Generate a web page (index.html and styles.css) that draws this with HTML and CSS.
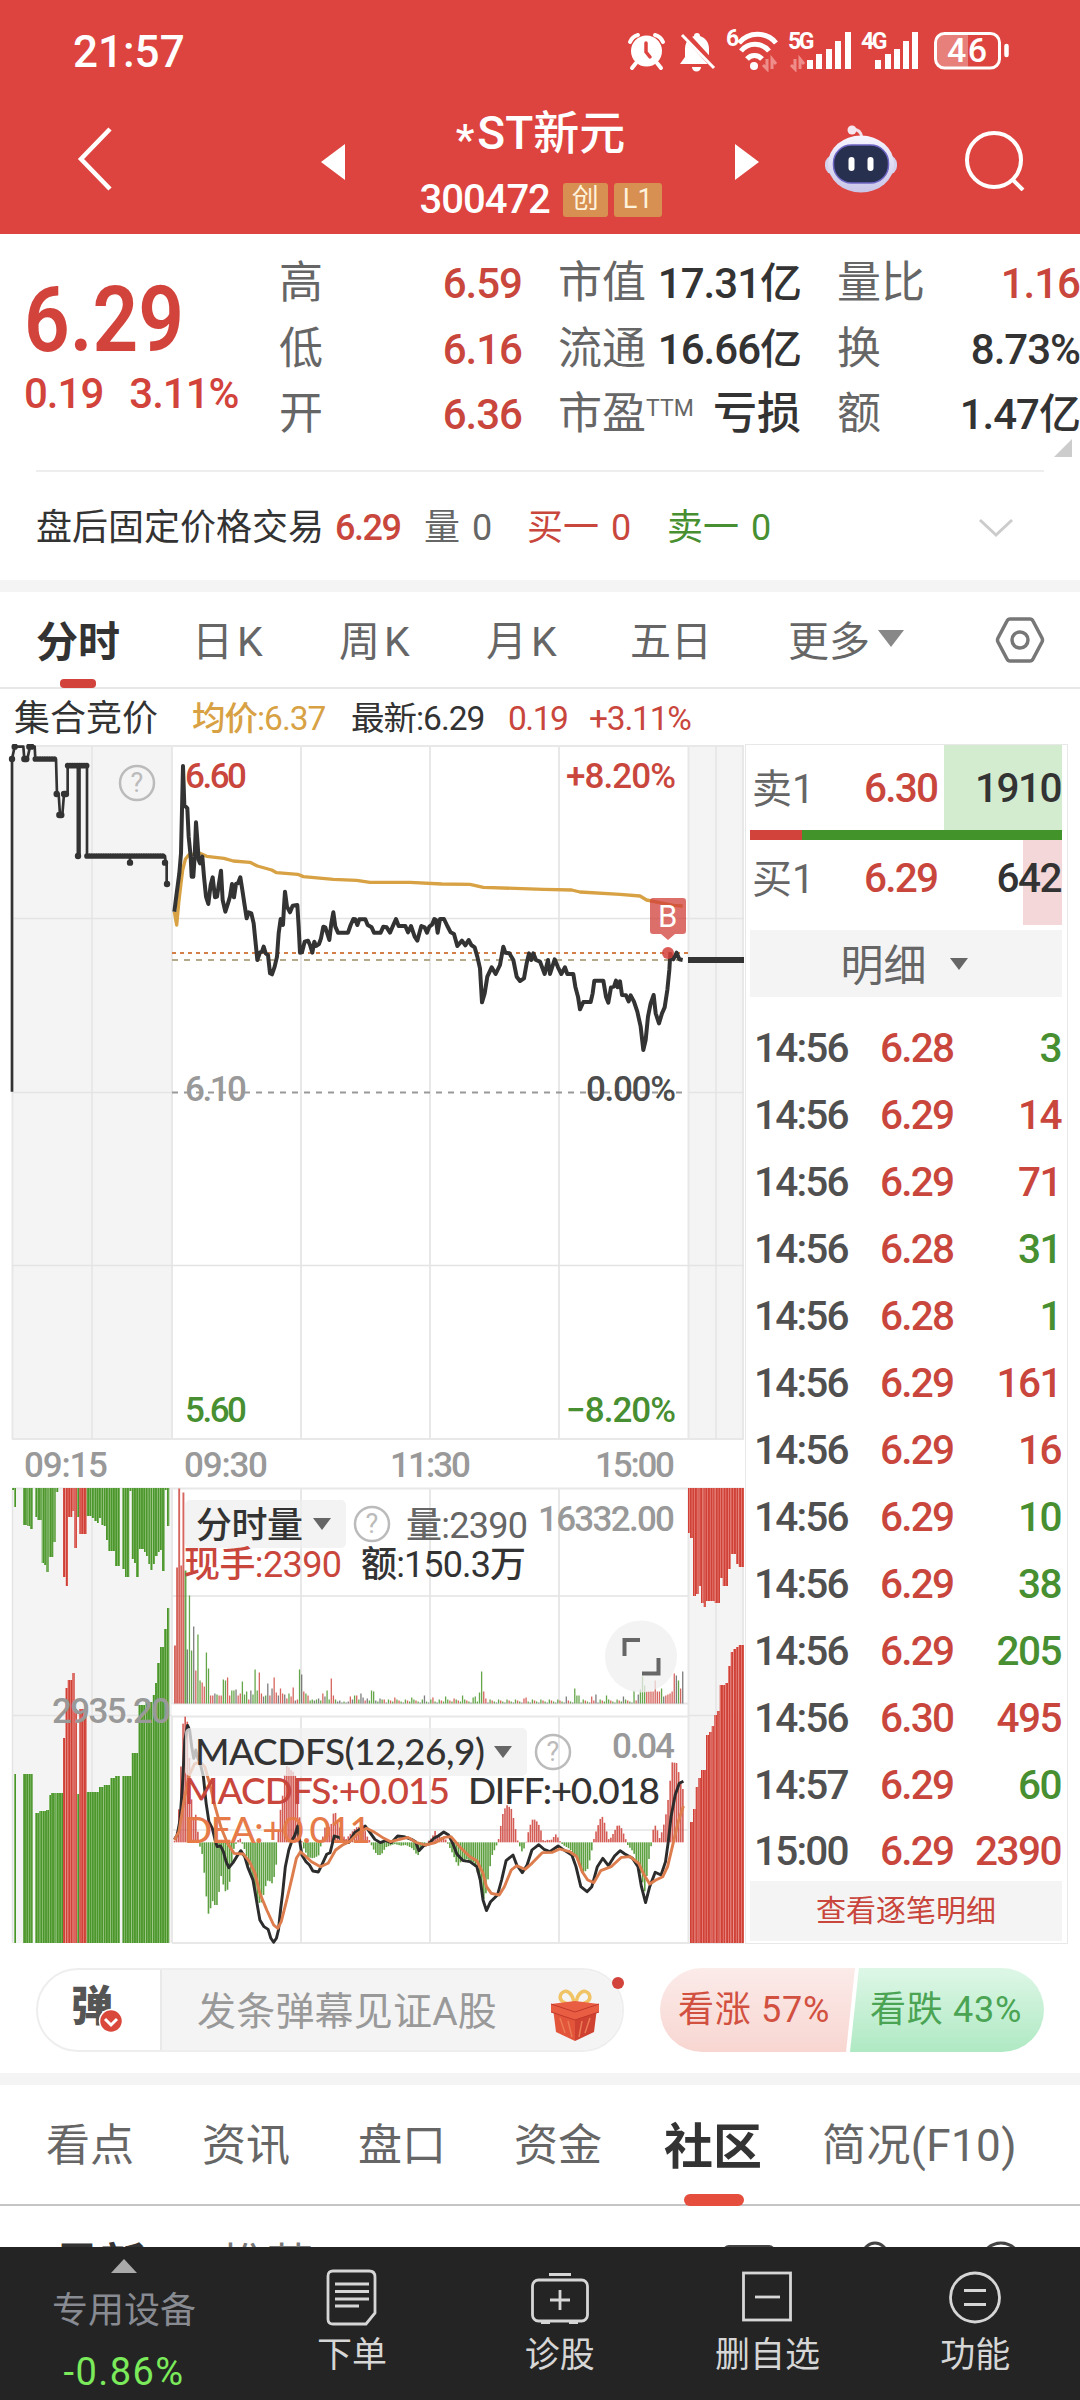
FILE: index.html
```html
<!DOCTYPE html>
<html lang="zh-CN">
<head>
    <meta charset="UTF-8">
    <meta name="viewport" content="width=device-width, initial-scale=1.0">
    <title>*ST新元 300472</title>
    <link rel="stylesheet" href="styles.css">
</head>
<body>
    <header class="header">
        <div class="status-bar">
            <span class="clock">21:57</span>
            <svg class="status-icons" width="386" height="46" viewBox="626 26 386 46">
                <!-- alarm -->
                <g fill="none" stroke="#fff" stroke-linecap="round">
                    <circle cx="646.500" cy="51" r="15.500" fill="#fff" stroke="none"/>
                    <path d="M630 42a12 12 0 0 1 8-7M663 42a12 12 0 0 0-8-7" stroke-width="4"/>
                    <path d="M636 63l-4 5M657 63l4 5" stroke-width="4"/>
                    <path d="M646 43v9l4 5" stroke="#dd443f" stroke-width="3.500"/>
                </g>
                <!-- muted bell -->
                <path d="M697 33c2 0 3 1 3 3 6 2 9 7 9 13v8l5 7H680l5-7v-8c0-6 3-11 9-13 0-2 1-3 3-3zM692 67h9a4.500 4.500 0 0 1-9 0z" fill="#fff"/>
                <path d="M684 33l32 35" stroke="#dd443f" stroke-width="7"/>
                <path d="M682 35l32 33" stroke="#fff" stroke-width="3"/>
                <!-- wifi -->
                <text x="726" y="46" class="st-small">6</text>
                <g fill="none" stroke="#fff" stroke-width="5">
                    <path d="M739 43a24 24 0 0 1 37 0"/>
                    <path d="M741 51a18 18 0 0 1 28 0"/>
                    <path d="M747 59a10 10 0 0 1 15 0"/>
                </g>
                <circle cx="754" cy="66" r="4" fill="#fff"/>
                <path d="M767 59v10l-4-4M772 69V59l4 5M795 59v10l-4-4M800 69V59l4 5" fill="none" stroke="#ee8d8a" stroke-width="3"/>
                <!-- signals -->
                <text x="788" y="49" class="st-small">5G</text>
                <path d="M810 69v-9M819 69V54M829 69V49M838 69V41M848 69V32M878 69v-9M888 69V54M897 69V49M906 69V41M915 69V32" stroke="#fff" stroke-width="6"/>
                <text x="861" y="49" class="st-small">4G</text>
                <!-- battery -->
                <path d="M944 34h24v34h-24q-8 0-8-8V42q0-8 8-8z" fill="#e77f7b"/>
                <rect x="935.500" y="33.500" width="64" height="34.500" rx="9" fill="none" stroke="#fff" stroke-width="3"/>
                <path d="M1006.500 46v9" stroke="#fff" stroke-width="4.500" stroke-linecap="round"/>
                <text x="947" y="62" class="st-batt" textLength="40">46</text>
            </svg>
        </div>
        <div class="title-bar">
            <svg class="back" width="38" height="66" viewBox="0 0 38 66"><path d="M33 3L4 33l29 30" fill="none" stroke="#fff" stroke-width="4.500"/></svg>
            <svg class="prev" width="24" height="36" viewBox="0 0 24 36"><path d="M24 0v36L0 18z" fill="#fff"/></svg>
            <div class="title">
                <h1><span class="star">*</span>ST新元</h1>
                <p class="code"><span>300472</span><b>创</b><b>L1</b></p>
            </div>
            <svg width="24" height="36" viewBox="0 0 24 36"><path d="M0 0v36l24-18z" fill="#fff"/></svg>
            <svg class="robot" width="74" height="70" viewBox="824 124 74 70">
                <defs>
                    <linearGradient id="shell" x1="0" y1="0" x2="0" y2="1"><stop offset="0" stop-color="#f6f5ff"/><stop offset="1" stop-color="#c9c5e8"/></linearGradient>
                </defs>
                <path d="M862 138q-1-9-10-9" fill="none" stroke="#f3dfe8" stroke-width="3"/>
                <circle cx="852" cy="130" r="4.500" fill="#f5e6f0"/>
                <rect x="825" y="155" width="72" height="20" rx="9" fill="#d5d2ee"/>
                <ellipse cx="861" cy="164" rx="33" ry="28.500" fill="url(#shell)"/>
                <rect x="833.500" y="145" width="55" height="38" rx="18" fill="#27304f" stroke="#6d66c4" stroke-width="1.500"/>
                <path d="M851.500 160v8M870.500 160v8" stroke="#fff" stroke-width="6" stroke-linecap="round"/>
            </svg>
            <svg class="search" width="60" height="62" viewBox="0 0 60 62"><circle cx="29" cy="31" r="27" fill="none" stroke="#fff" stroke-width="4"/><path d="M47 50l11 11" stroke="#fff" stroke-width="4"/></svg>
        </div>
    </header>

    <section class="quote">
        <div class="price">
            <div class="last">6.29</div>
            <div class="change"><span>0.19</span><span>3.11%</span></div>
        </div>
        <dl class="stats">
            <dt>高</dt><dd class="red">6.59</dd>
            <dt>市值</dt><dd>17.31亿</dd>
            <dt>量比</dt><dd class="red">1.16</dd>
            <dt>低</dt><dd class="red">6.16</dd>
            <dt>流通</dt><dd>16.66亿</dd>
            <dt>换</dt><dd>8.73%</dd>
            <dt>开</dt><dd class="red">6.36</dd>
            <dt>市盈<sup>TTM</sup></dt><dd class="wide">亏损</dd>
            <dt>额</dt><dd>1.47亿</dd>
        </dl>
        <svg class="corner" width="18" height="18" viewBox="0 0 18 18"><path d="M18 0v18H0z" fill="#ccc"/></svg>
    </section>
    <section class="after-hours">
        <span class="ah-name">盘后固定价格交易</span>
        <span class="ah-price red">6.29</span>
        <span class="ah-vol">量 0</span>
        <span class="ah-buy red">买一 0</span>
        <span class="ah-sell green">卖一 0</span>
        <svg class="ah-more" width="36" height="20" viewBox="0 0 36 20"><path d="M2 2l16 15L34 2" fill="none" stroke="#ccc" stroke-width="3"/></svg>
    </section>

    <nav class="chart-tabs">
        <span class="active">分时</span>
        <span>日K</span>
        <span>周K</span>
        <span>月K</span>
        <span>五日</span>
        <span class="more">更多<i></i></span>
        <svg class="setting" width="50" height="48" viewBox="0 0 50 48"><path d="M15 3h20q2 0 3 2l9 17q1 2 0 4l-9 17q-1 2-3 2H15q-2 0-3-2L3 26q-1-2 0-4l9-17q1-2 3-2z" fill="none" stroke="#777" stroke-width="3.500"/><circle cx="25" cy="24" r="8" fill="none" stroke="#777" stroke-width="3.500"/></svg>
    </nav>

    <div class="info-row">
        <span class="ir-name">集合竞价</span>
        <span class="ir-avg">均价:6.37</span>
        <span class="ir-last">最新:6.29</span>
        <span class="ir-diff red">0.19</span>
        <span class="ir-pct red">+3.11%</span>
    </div>

    <main class="board">
        <svg class="chart" width="745" height="1200" viewBox="0 744 745 1200">
            <defs>
                <pattern id="stripeGreen" width="2.340" height="10" patternUnits="userSpaceOnUse"><rect width="2.340" height="10" fill="#4b962b"/><rect width=".5" height="10" fill="#a8d092"/></pattern>
                <pattern id="stripeRed" width="2.600" height="10" patternUnits="userSpaceOnUse"><rect width="2.600" height="10" fill="#cf4037"/><rect width=".6" height="10" fill="#f29a92"/></pattern>
            </defs>

            <!-- panels and grid -->
            <path d="M12 746h160v693H12zM688 746h56v693h-56zM12 1488h160v455H12zM688 1488h56v455h-56z" fill="#f4f4f4"/>
            <g class="grid">
                <path d="M12 746H744M12 1439H744M12 1488.500H744M172 1716.500H688M172 1943H744M172 1703.500H688"/>
                <path d="M12.500 746v693M172 746v693M301 746v693M430 746v693M559 746v693M688.500 746v693M743 746v693"/>
                <path d="M172 1489v215M301 1489v215M430 1489v215M559 1489v215M688.500 1489v454M743 1489v454M172 1716v227M301 1716v227M430 1716v227M559 1716v227"/>
                <path class="thin" d="M92 746v693M716 746v693M12 918.500H744M12 1265.500H744M12 1092.500H172M688 1092.500H744M92 1489v454M716 1489v454M12.500 1489v454M172 1596H688M12 1715.500H172M688 1715.500H744M172 1830H688"/>
            </g>
            <g fill="none" stroke-width="2">
                <path d="M172 1092.500H682" stroke="#999" stroke-dasharray="6 6"/>
                <path d="M172 960H688" stroke="#b5a98b" stroke-dasharray="6 6"/>
                <path d="M172 953H688" stroke="#d27f4a" stroke-dasharray="4 4"/>
            </g>

            <!-- price labels -->
            <text x="185" y="788" class="red" textLength="62">6.60</text>
            <text x="566" y="788" class="red" textLength="110">+8.20%</text>
            <text x="185" y="1101" class="gray" textLength="62">6.10</text>
            <text x="586" y="1101" class="dark" textLength="90">0.00%</text>
            <text x="185" y="1422" class="green" textLength="62">5.60</text>
            <text x="566" y="1422" class="green" textLength="110">−8.20%</text>
            <text x="24" y="1477" class="gray" textLength="84">09:15</text>
            <text x="184" y="1477" class="gray" textLength="84">09:30</text>
            <text x="390" y="1477" class="gray" textLength="81">11:30</text>
            <text x="595" y="1477" class="gray" textLength="80">15:00</text>

            <!-- call auction and intraday price -->
            <g transform="translate(0 740) scale(.33333)" fill="none" stroke="#333" stroke-linejoin="round">
                <path stroke-width="8" d="M36 1055V57L44 20H70L73 57H82L90 20H104L106 57H168L171 162H176L180 225H187L192 162H203V77H261V348H390V368V348H495L497 368H500V432"/>
                <path stroke-width="13" d="M236 77V348"/>
                <path stroke-width="17" stroke-linecap="round" stroke-dasharray=".1 7" d="M106 57H168M203 77H261M261 348H495"/>
                <path stroke-width="19" stroke-linecap="round" d="M36 57h.1M44 20h.1M73 57h6M88 20h6M170 162h.1M178 225h6M192 162h6M234 348h.1M390 368h.1M495 368h.1M501 432h.1"/>
                <path stroke="#d7a144" stroke-width="10" d="M523 515L530 555L536 490L543 430L548 390L556 358L566 345L600 340L620 349L672 355L700 363L750 367L772 378L815 390L830 398L893 403L910 410L1000 418L1070 421L1110 427L1230 427L1325 432L1410 433L1450 442L1630 448L1715 450L1740 456L1860 463L1920 468L1940 480L2020 496L2048 498"/>
                <path stroke-width="12" d="M523 515L530 460L538 400L543 340L549 78L553 195L562 205L566 290L572 350L575 410L580 410L584 350L588 247L592 300L596 360L600 370L607 350L612 410L618 470L625 492L632 435L638 412L645 472L651 470L657 430L663 392L668 480L676 515L684 490L690 470L696 432L702 472L708 432L714 430L721 412L727 450L733 490L740 535L746 517L754 520L761 550L766 600L772 660L780 637L786 635L791 620L797 640L804 645L810 700L816 703L824 680L831 650L836 580L842 537L849 555L852 500L855 455L861 500L870 517L878 497L892 495L896 560L900 638L906 637L914 605L924 602L930 615L937 638L943 605L948 618L957 612L963 595L970 560L976 562L988 600L994 550L1000 517L1006 560L1014 578L1044 578L1052 555L1060 537L1066 538L1072 555L1078 538L1096 538L1103 555L1115 562L1122 578L1142 578L1150 560L1160 562L1170 578L1180 555L1188 537L1196 558L1216 558L1224 577L1233 558L1244 590L1252 602L1258 580L1264 558L1274 562L1281 578L1288 560L1296 554L1303 537L1308 540L1313 578L1320 537L1332 537L1342 558L1352 577L1362 582L1372 618L1386 602L1396 616L1406 600L1414 615L1424 622L1432 650L1440 685L1446 787L1454 760L1462 710L1475 682L1487 702L1500 675L1510 620L1516 638L1528 640L1540 660L1550 710L1560 723L1572 715L1580 670L1587 640L1594 660L1600 640L1608 660L1620 665L1634 702L1644 660L1650 702L1664 658L1674 682L1684 702L1695 682L1702 702L1720 702L1726 740L1734 770L1740 808L1750 786L1772 786L1778 760L1783 722L1810 722L1818 770L1825 788L1833 742L1842 740L1848 722L1853 742L1860 724L1866 765L1878 766L1886 784L1892 766L1902 785L1912 815L1922 860L1930 930L1937 900L1944 830L1952 790L1961 765L1967 820L1977 850L1986 820L1994 802L2002 750L2008 690L2011 642L2020 658L2030 638L2038 658L2048 660"/>
            </g>
            <path d="M688 960H744" stroke="#333" stroke-width="6"/>

            <!-- buy marker -->
            <path d="M653 898h30q3 0 3 3v30q0 3-3 3h-8l-7 6-7-6h-8q-3 0-3-3v-30q0-3 3-3z" fill="#d23f39" opacity=".75"/>
            <text x="658" y="927" class="marker">B</text>
            <circle cx="668" cy="953" r="6" fill="#d23f39" opacity=".85"/>

            <g id="sideBars"></g>
            <g id="volumeBars"></g>
            <g id="macdBars" transform="translate(160 1700) scale(.34437 .33333)"></g>
            <g transform="translate(160 1700) scale(.34437 .33333)" fill="none" stroke-width="8.500" stroke-linejoin="round">
                <path stroke="#2c2c2c" d="M42 418L50 405L58 360L65 260L72 120L80 76L86 90L92 140L98 175L104 150L110 175L118 195L126 230L134 310L142 365L152 385L160 420L166 440L176 438L184 455L192 485L200 503L212 488L224 468L235 452L246 470L256 505L270 540L280 600L290 660L302 680L314 688L322 715L330 727L338 715L344 690L350 630L356 580L364 500L374 450L384 420L392 405L400 378L406 425L412 465L424 485L434 495L444 513L460 516L472 490L484 463L494 458L506 408L520 412L532 424L548 428L565 398L580 388L596 378L608 395L624 418L640 428L655 422L672 428L690 408L708 410L730 418L742 425L752 452L765 438L780 432L795 415L808 408L824 396L838 405L850 430L862 462L880 482L900 485L920 500L930 540L938 600L948 632L960 605L980 585L992 540L1005 482L1025 465L1036 495L1052 518L1066 495L1080 450L1100 434L1115 448L1132 455L1156 438L1170 448L1196 465L1208 500L1222 560L1240 575L1254 560L1270 500L1286 475L1302 497L1320 468L1336 452L1350 462L1372 475L1388 500L1398 560L1410 608L1422 560L1438 517L1455 525L1468 485L1476 425L1484 350L1496 285L1508 250L1520 244"/>
                <path stroke="#dd7c4c" d="M42 420L55 395L70 300L85 225L100 192L116 185L130 200L145 255L160 320L178 385L196 430L215 460L242 462L260 485L276 520L290 580L310 630L330 675L342 685L352 665L368 600L384 530L396 475L408 455L422 468L440 485L466 500L488 490L510 450L530 435L550 425L575 400L600 385L620 395L650 415L670 425L690 420L720 412L745 428L770 435L800 428L825 412L845 410L870 440L900 470L920 482L938 520L948 560L962 580L985 585L1000 560L1020 510L1036 497L1060 508L1080 490L1110 458L1140 457L1160 447L1190 455L1210 470L1226 515L1242 540L1260 548L1280 512L1310 500L1340 472L1365 470L1390 490L1406 525L1422 552L1440 540L1460 530L1474 500L1490 430L1505 365L1520 318"/>
            </g>

            <!-- indicator labels -->
            <text x="52" y="1723" class="gray" textLength="119">2935.20</text>
            <g fill="#efefef" opacity=".75">
                <rect x="185" y="1500" width="161" height="48" rx="5"/>
                <rect x="185" y="1728" width="342" height="48" rx="5"/>
                <circle cx="641" cy="1656.500" r="36"/>
            </g>
            <path d="M313 1518h18l-9 12zM494 1746h18l-9 12z" fill="#666"/>
            <path d="M624.500 1656v-16H640M642 1673.500h16.500V1658" fill="none" stroke="#666" stroke-width="4"/>
            <text x="196" y="1538" class="black cjk" textLength="107">分时量</text>
            <text x="406" y="1538" class="dim cjk" textLength="122">量:2390</text>
            <text x="538" y="1531" class="gray" textLength="137">16332.00</text>
            <text x="184" y="1577" class="red cjk" textLength="158">现手:2390</text>
            <text x="361" y="1577" class="black cjk" textLength="165">额:150.3万</text>
            <text x="195" y="1765" class="black latin" textLength="290">MACDFS(12,26,9)</text>
            <text x="612" y="1758" class="gray" textLength="63">0.04</text>
            <text x="184" y="1804" class="red latin" textLength="266">MACDFS:+0.015</text>
            <text x="468" y="1804" class="black latin" textLength="192">DIFF:+0.018</text>
            <text x="184" y="1843" class="orange latin" textLength="187">DEA:+0.011</text>
            <g class="help">
                <circle cx="137" cy="783" r="17"/><text x="137" y="792">?</text>
                <circle cx="372" cy="1524" r="17"/><text x="372" y="1533">?</text>
                <circle cx="553" cy="1752" r="17"/><text x="553" y="1761">?</text>
            </g>
        </svg>

        <aside class="ticks">
            <div class="level sell"><span>卖1</span><b>6.30</b><em>1910</em></div>
            <div class="ratio"><i></i></div>
            <div class="level buy"><span>买1</span><b>6.29</b><em>642</em></div>
            <div class="detail-head">明细<i></i></div>
            <ul>
                <li><span>14:56</span><b>6.28</b><em class="green">3</em></li>
                <li><span>14:56</span><b>6.29</b><em class="red">14</em></li>
                <li><span>14:56</span><b>6.29</b><em class="red">71</em></li>
                <li><span>14:56</span><b>6.28</b><em class="green">31</em></li>
                <li><span>14:56</span><b>6.28</b><em class="green">1</em></li>
                <li><span>14:56</span><b>6.29</b><em class="red">161</em></li>
                <li><span>14:56</span><b>6.29</b><em class="red">16</em></li>
                <li><span>14:56</span><b>6.29</b><em class="green">10</em></li>
                <li><span>14:56</span><b>6.29</b><em class="green">38</em></li>
                <li><span>14:56</span><b>6.29</b><em class="green">205</em></li>
                <li><span>14:56</span><b>6.30</b><em class="red">495</em></li>
                <li><span>14:57</span><b>6.29</b><em class="green">60</em></li>
                <li><span>15:00</span><b>6.29</b><em class="red">2390</em></li>
            </ul>
            <div class="detail-foot">查看逐笔明细</div>
        </aside>
    </main>

    <section class="danmu">
        <div class="danmu-box">
            <div class="danmu-switch">弹
                <svg class="check" width="26" height="26" viewBox="0 0 26 26"><circle cx="13" cy="13" r="11.500" fill="#d9483a" stroke="#fff" stroke-width="1.500"/><path d="M7 11l6 6 6-6" fill="none" stroke="#fff" stroke-width="3"/></svg>
            </div>
            <div class="danmu-input"><span>发条弹幕见证A股</span>
                <svg width="50" height="54" viewBox="0 0 50 54">
                    <path d="M24 16c-10 1-16-4-13-10 4-6 12-2 13 10zM26 16c10 1 16-4 13-10-4-6-12-2-13 10z" fill="none" stroke="#f0c465" stroke-width="3.500"/>
                    <path d="M3 20l22 9v24L6 44z" fill="#e2553a"/>
                    <path d="M47 20l-22 9v24l19-9z" fill="#cf4130"/>
                    <path d="M1 16l24-3 24 3v8l-24 8-24-8z" fill="#e95d43"/>
                    <path d="M1 16l24 8 24-8M1 24l24 8 24-8" fill="none" stroke="#c2392b" stroke-width="1"/>
                    <path d="M10 30l5 15M18 33l4 16M40 30l-5 15M32 33l-3 16" stroke="#ec7a54" stroke-width="1.500"/>
                </svg>
            </div>
            <i class="dot"></i>
        </div>
        <div class="vote"><span class="up">看涨 57%</span><span class="down">看跌 43%</span></div>
    </section>

    <nav class="page-tabs">
        <span>看点</span><span>资讯</span><span>盘口</span><span>资金</span><span class="active">社区</span><span class="last-tab">简况(F10)</span>
    </nav>
    <div class="sub-tabs">
        <b>最新</b><span>推荐</span>
        <svg width="300" height="42" viewBox="720 2205 300 42"><g fill="none" stroke="#444" stroke-width="3"><rect x="724" y="2245.500" width="50" height="40" rx="5"/><circle cx="875" cy="2254" r="12"/><circle cx="1001" cy="2262" r="20"/></g></svg>
    </div>

    <footer class="toolbar">
        <div class="sector"><i></i><span>专用设备</span><em>-0.86%</em></div>
        <div class="tool">
            <svg width="58" height="58" viewBox="0 0 58 58"><path d="M10 3h36q6 0 6 6v36l-9 11H10q-5 0-5-5V8q0-5 5-5z"/><path d="M12 16h34M12 23.500h34M12 31h34M12 38h24"/></svg>
            <span>下单</span>
        </div>
        <div class="tool">
            <svg width="58" height="58" viewBox="0 0 58 58"><rect x="1.500" y="12" width="55" height="41" rx="6"/><path d="M18 6.500h22M29 22v20M19 32h20M10 54.500h9M38 54.500h9"/></svg>
            <span>诊股</span>
        </div>
        <div class="tool">
            <svg width="58" height="58" viewBox="0 0 58 58"><rect x="5.500" y="5" width="47" height="47"/><path d="M17 29h25"/></svg>
            <span>删自选</span>
        </div>
        <div class="tool">
            <svg width="58" height="58" viewBox="0 0 58 58"><circle cx="29" cy="29.500" r="24.500"/><path d="M18 22.500h22M18 36.500h22"/></svg>
            <span>功能</span>
        </div>
    </footer>

    <script src="script.js"></script>
</body>
</html>
```
FILE: styles.css
```css
* {
    margin: 0;
    padding: 0;
    box-sizing: border-box;
}

body {
    width: 1080px;
    height: 2400px;
    overflow: hidden;
    background-color: #fff;
    color: #333;
    font-family: Roboto, "Noto Sans CJK SC", sans-serif;
    white-space: nowrap;
}

svg { display: block; flex: none; }
b, em, i { font-style: normal; font-weight: inherit; }
ul { list-style: none; }

.red { color: #c9463d; }
.green { color: #478f31; }

/* Header */
.header {
    height: 234px;
    background-color: #dd443f;
    color: #fff;
}

.status-bar {
    display: flex;
    justify-content: space-between;
    height: 103px;
    padding: 26px 68px 0 73px;
}

.clock {
    margin-top: 4px;
    font-size: 44px;
    font-weight: 500;
    line-height: 44px;
}

.st-small { font-size: 23px; font-weight: 700; letter-spacing: -2.500px; fill: #fff; }
.st-batt { font-size: 34px; font-weight: 500; fill: #fff; }

.title-bar {
    display: flex;
    align-items: flex-start;
}

.back { margin: 23px 0 0 77px; }
.prev { margin-left: 206px; }
.prev, .title + svg { margin-top: 41px; }
.title { width: 391px; text-align: center; }
.title + svg { margin-left: -1px; }
.robot { margin: 21px 0 0 65px; }
.search { margin: 26px 0 0 67px; }

.title h1 {
    padding-top: 2px;
    font-size: 46px;
    font-weight: 500;
    line-height: 56px;
}

.star { position: relative; top: 5px; font-size: 42px; margin-right: 3px; }

.code {
    display: flex;
    justify-content: center;
    align-items: center;
    gap: 6px;
    height: 34px;
    margin-top: 20px;
}

.code span {
    margin: -1px 7px 0 0;
    font-size: 40px;
    font-weight: 500;
    letter-spacing: -1px;
}

.code b {
    height: 34px;
    padding: 0 9px;
    border-radius: 3px;
    background-color: #d78f52;
    font-size: 27px;
    line-height: 32px;
    color: #fff2dc;
}

/* Quote */
.quote {
    display: flex;
    position: relative;
    height: 236px;
    padding-top: 17px;
}

.price { width: 279px; padding: 18px 0 0 24px; color: #d2433b; }

.last {
    font-size: 91px;
    font-weight: 600;
    line-height: 102px;
    transform: scaleX(.88);
    transform-origin: left;
}

.change {
    display: flex;
    gap: 26px;
    margin-top: -1px;
    font-size: 42px;
    font-weight: 500;
    line-height: 48px;
    letter-spacing: -1px;
}

.stats {
    display: grid;
    grid-template-columns: 100px 143px 137px 142px 137px 142px;
    grid-auto-rows: 65.500px;
    line-height: 65.500px;
}

.stats dt { font-size: 44px; color: #666; }
.stats dt:nth-of-type(3n+2), .stats dt:nth-of-type(3n) { padding-left: 36px; }

.stats sup {
    position: relative;
    top: -13px;
    font-size: 23px;
    line-height: 0;
    vertical-align: baseline;
}

.stats dd {
    display: flex;
    justify-content: flex-end;
    font-size: 42px;
    font-weight: 500;
    letter-spacing: -1px;
}

.stats .wide { font-size: 44px; letter-spacing: 0; }
.corner { position: absolute; left: 1054px; top: 205px; }

.after-hours {
    display: flex;
    align-items: center;
    height: 110px;
    margin: 0 36px;
    border-top: 2px solid #eee;
    font-size: 36px;
    line-height: 40px;
    padding-top: 3px;
}

.ah-name { width: 299px; }
.ah-price { width: 89px; letter-spacing: -1.500px; font-weight: 500; }
.ah-vol { width: 103px; color: #666; }
.ah-buy { width: 140px; }
.ah-sell { width: 276px; }
.ah-vol, .ah-buy, .ah-sell { word-spacing: 3px; }
.ah-more { margin-left: 35px; }

/* Chart tabs */
.chart-tabs {
    display: flex;
    align-items: center;
    height: 109px;
    border-top: 12px solid #f4f4f4;
    border-bottom: 2px solid #e8e8e8;
    padding: 0 0 3px 36px;
    font-size: 41px;
    color: #666;
}

.chart-tabs span { width: 147px; letter-spacing: 4px; }
.chart-tabs span:nth-child(1) { width: 156px; }
.chart-tabs span:nth-child(4) { width: 144px; }
.chart-tabs span:nth-child(5) { width: 158px; letter-spacing: 0; }
.chart-tabs .more { display: flex; align-items: center; width: 207px; letter-spacing: 0; }
.setting { margin-top: 3px; }

.chart-tabs .more i {
    margin-left: 8px;
    border: 13px solid transparent;
    border-top: 17px solid #888;
    border-bottom: 0;
}

.chart-tabs .active {
    position: relative;
    font-size: 42px;
    font-weight: 700;
    letter-spacing: 0;
    color: #333;
}

.chart-tabs .active::after {
    content: "";
    position: absolute;
    left: 24px;
    bottom: -19px;
    width: 36px;
    height: 9px;
    border-radius: 4px;
    background-color: #d2433b;
}

.info-row {
    display: flex;
    align-items: center;
    height: 55px;
    padding: 5px 0 0 14px;
    font-size: 33.500px;
    line-height: 40px;
    letter-spacing: -1px;
}

.ir-name { width: 178px; font-size: 36px; letter-spacing: 0; }
.ir-avg { width: 159px; color: #d7a144; font-weight: 450; }
.ir-last { width: 157px; }
.ir-diff { width: 81px; letter-spacing: -1.500px; }
.ir-pct { letter-spacing: -1.200px; }

/* Chart and ticks */
.board { display: flex; height: 1200px; }

.grid path { fill: none; stroke: #e8e8e8; stroke-width: 2; }
.grid .thin { stroke: #e4e4e4; stroke-width: 1.500; }

.chart text { font-size: 35px; font-weight: 500; }
.chart .cjk { font-size: 36px; font-weight: 450; }
.chart .latin { font-family: Lato, "Noto Sans", sans-serif; font-size: 37px; }
.chart .red { fill: #c9463d; }
.chart .green { fill: #478f31; }
.chart .gray { fill: #999; }
.chart .dim { fill: #666; }
.chart .dark { fill: #4c4c4c; }
.chart .black { fill: #333; }
.chart .orange { fill: #e67b49; }
.chart .marker { font-size: 31px; font-weight: 400; fill: #fff; }
.help circle { fill: none; stroke: #bbb; stroke-width: 2.500; }
.chart .help text { font-size: 27px; font-weight: 400; fill: #bbb; text-anchor: middle; }

.ticks {
    width: 323px;
    border: 1px solid #e8e8e8;
    padding: 0 5px 0 4px;
    font-size: 40.500px;
    font-weight: 500;
    letter-spacing: -1.800px;
}

.level {
    display: flex;
    align-items: center;
    height: 85px;
    padding: 1px 1px 0 2px;
}

.level span { width: 112px; margin-top: -4px; font-size: 40px; font-weight: 400; color: #666; letter-spacing: 0; }
.level b, .ticks li b { color: #c9463d; }
.level em, .ticks li em { margin-left: auto; letter-spacing: -1.500px; }
.sell { background: linear-gradient(#d3ebcf, #d3ebcf) right / 118px no-repeat; }

.ratio { height: 10px; background-color: #43932b; }
.ratio i { display: block; width: 52px; height: 10px; background-color: #d2433b; }

.buy {
    height: 85px;
    padding: 0 1px 9px 2px;
    background: linear-gradient(#f4d8d9, #f4d8d9) right / 39px no-repeat;
}

.detail-head {
    display: flex;
    align-items: center;
    justify-content: center;
    height: 67px;
    margin-top: 5px;
    padding: 0 0 4px;
    background-color: #f4f4f4;
    color: #666;
    font-size: 43px;
    font-weight: 400;
    letter-spacing: 0;
}

.detail-head i {
    margin: 4px 4px 0 23px;
    border: 9px solid transparent;
    border-top: 12px solid #666;
    border-bottom: 0;
}

.ticks ul { padding-top: 17px; }

.ticks li {
    display: flex;
    align-items: center;
    height: 67px;
    padding: 0 1px 0 4px;
}

.ticks li span { width: 126px; color: #505050; }
.ticks li:last-child { height: 66px; margin-bottom: -3px; }

.detail-foot {
    height: 60px;
    background-color: #f4f4f4;
    color: #c9463d;
    font-size: 30px;
    font-weight: 400;
    line-height: 59px;
    letter-spacing: 0;
    text-align: center;
}

/* Danmu bar */
.danmu {
    display: flex;
    gap: 36px;
    height: 129px;
    padding: 24px 36px 0;
}

.danmu-box {
    display: flex;
    position: relative;
    width: 588px;
    height: 84px;
    border: 2px solid #eee;
    border-radius: 42px;
}

.danmu-switch {
    position: relative;
    width: 124px;
    border-right: 2px solid #e9e9e9;
    padding-left: 33px;
    font-size: 42px;
    font-weight: 900;
    line-height: 74px;
    color: #555;
}

.check { position: absolute; left: 60px; top: 38px; }

.danmu-input {
    display: flex;
    align-items: center;
    justify-content: space-between;
    flex: 1;
    border-radius: 0 40px 40px 0;
    background-color: #f4f4f4;
    padding: 0 22px 0 35px;
    font-size: 39px;
    letter-spacing: .2px;
    color: #999;
}

.danmu-input span { margin-top: -4px; }
.danmu-input svg { margin-top: 10px; }

.dot {
    position: absolute;
    right: -2px;
    top: 7px;
    width: 12px;
    height: 12px;
    border-radius: 50%;
    background-color: #d2433b;
}

.vote {
    display: flex;
    width: 384px;
    height: 84px;
    border-radius: 42px;
    overflow: hidden;
    font-size: 36px;
    line-height: 84px;
    letter-spacing: .7px;
}

.vote .up {
    width: 195px;
    padding-left: 18px;
    background: linear-gradient(#fbebe9, #f8d6d1);
    clip-path: polygon(0 0, 100% 0, 95.400% 100%, 0 100%);
    color: #d2503f;
}

.vote .down {
    width: 194px;
    margin-left: -5px;
    padding-left: 20px;
    background: linear-gradient(#def7e7, #afe9c3);
    clip-path: polygon(4.600% 0, 100% 0, 100% 100%, 0 100%);
    color: #4aa453;
}

/* Page tabs */
.page-tabs {
    display: flex;
    align-items: center;
    height: 133px;
    border-top: 12px solid #f4f4f4;
    border-bottom: 2px solid #c5c5c5;
    padding: 0 0 5px 46px;
    font-size: 44px;
    color: #666;
}

.page-tabs span { width: 156px; }
.page-tabs span:nth-child(4) { width: 150px; }
.page-tabs .last-tab { letter-spacing: .4px; }

.page-tabs .active {
    position: relative;
    width: 158px;
    font-size: 49px;
    font-weight: 700;
    color: #333;
}

.page-tabs .active::after {
    content: "";
    position: absolute;
    left: 20px;
    bottom: -28px;
    width: 60px;
    height: 12px;
    border-radius: 6px;
    background-color: #e54d3d;
}

.sub-tabs {
    display: flex;
    height: 41px;
    padding: 29px 0 0 54px;
    overflow: hidden;
    font-size: 46px;
    line-height: 60px;
    color: #777;
}

.sub-tabs b { width: 167px; font-weight: 700; color: #333; }
.sub-tabs span { width: 499px; }
.sub-tabs svg { margin-top: -29px; }

/* Bottom toolbar */
.toolbar {
    display: flex;
    height: 153px;
    background-color: #242424;
    color: #d6d6d6;
    font-size: 35px;
    line-height: 44px;
}

.sector {
    display: flex;
    flex-direction: column;
    align-items: center;
    width: 248px;
    padding-top: 12px;
    color: #888b92;
}

.sector i {
    border: 13px solid transparent;
    border-top: 0;
    border-bottom: 14px solid #aaa;
}

.sector span { margin-top: 16px; font-size: 36px; }
.sector em { margin-top: 17px; color: #7bea5b; font-size: 38px; letter-spacing: 1.400px; }

.tool {
    display: flex;
    flex-direction: column;
    align-items: center;
    width: 207.800px;
    padding-top: 21px;
}

.tool svg { fill: none; stroke: #d6d6d6; stroke-width: 2.800; }
.tool span { margin-top: 8px; }
```
FILE: script.js
```js
const NS = 'http://www.w3.org/2000/svg';

function bar(parent, x, y, w, h, fill, opacity) {
    const r = document.createElementNS(NS, 'rect');
    r.setAttribute('x', x);
    r.setAttribute('y', y);
    r.setAttribute('width', w);
    r.setAttribute('height', h);
    r.setAttribute('fill', fill);
    if (opacity) r.setAttribute('opacity', opacity);
    parent.appendChild(r);
}

const G = 'url(#stripeGreen)';
const R = 'url(#stripeRed)';

// Runs of equal bars: [from x, to x, length], lengths hang from the top or stand on the bottom
const TOP = 1488, BOTTOM = 1943;
const openTop = [
    [12, 14, 2, G], [14, 16, 19, G], [23, 27.300, 37, G], [27.300, 30, 38, G], [30, 32.700, 41, G],
    [35, 37.300, 29, G], [37.300, 41.700, 32, G], [41.700, 44, 75, G], [44, 46.300, 77, G], [46.300, 48.700, 84, G],
    [48.700, 53.300, 69, G], [53.300, 55.700, 54, G], [55.700, 58.300, 4, G],
    [63, 65.700, 89, R], [65.700, 68, 98, R], [68, 72.300, 29, R], [72.300, 74.300, 23, R], [74.300, 77, 60, R],
    [77, 79.300, 29, G], [79.300, 86.700, 46, R], [86.700, 91.700, 28, G], [91.700, 94.300, 30, G], [94.300, 97, 33, G],
    [97, 99, 35, G], [99, 101.300, 30, G], [101.300, 103.700, 37, G], [103.700, 106, 38, G], [106, 108.300, 52, G],
    [108.300, 115, 63, G], [115, 120, 78, G], [122.300, 125, 81, G], [125, 129.300, 89, G], [129.300, 131.700, 3, G],
    [131.700, 134, 71, G], [134, 136, 75, G], [136, 139, 89, G], [139, 144, 61, G], [144, 146, 64, G],
    [146, 148.300, 68, G], [148.300, 150.300, 76, G], [150.300, 152.700, 82, G], [152.700, 155, 76, G],
    [155, 157.700, 68, G], [157.700, 160, 64, G], [160, 162, 62, G], [162, 164.700, 83, G], [164.700, 167, 2, G],
    [167, 169.300, 38, G]
];
const openBottom = [
    [14, 16, 169, G], [23, 32.700, 169, G], [35, 39.300, 130, G], [39.300, 46, 132, G], [46, 49, 133, G],
    [49, 51, 148, G], [51, 55.700, 150, G], [55.700, 63, 150, G], [63, 65.300, 205, R], [65.300, 67.700, 255, R],
    [67.700, 72.300, 263, R], [72.300, 74.700, 270, R], [74.700, 77, 234, R], [77, 79.300, 149, G], [79.300, 86.700, 234, R],
    [86.700, 99, 151, G], [99, 103.700, 156, G], [103.700, 110.300, 158, G], [110.300, 115, 165, G], [115, 120, 167, G],
    [122.300, 131.700, 167, G], [131.700, 138.300, 190, G], [138.300, 145.300, 238, G], [145.300, 152.700, 241, G],
    [152.700, 155, 248, G], [155, 157, 260, G], [157, 160, 280, G], [160, 164, 296, G], [164, 167, 314, G], [167, 169.300, 335, G]
];
const closeTop = [
    [688, 690, 45, R], [690, 693, 50, R], [693, 696, 108, R], [696, 698.700, 106, R], [698.700, 701, 98, R],
    [701, 703.700, 115, R], [703.700, 706, 119, R], [706, 714.700, 113, R], [714.700, 720, 115, R], [720, 722.700, 90, R],
    [722.700, 728, 98, R], [728, 730.700, 81, R], [730.700, 736, 66, R], [736, 738.700, 76, R], [738.700, 744, 79, R]
];
const closeBottom = [
    [690, 693, 121, R], [693, 695.700, 134, R], [695.700, 698.300, 156, R], [698.300, 701, 165, R], [701, 706, 173, R],
    [706, 709, 208, R], [709, 711.700, 211, R], [711.700, 714.300, 217, R], [714.300, 717, 228, R], [717, 719.700, 232, R],
    [719.700, 725.300, 258, R], [725.300, 728, 260, R], [728, 730.700, 277, R], [730.700, 733.300, 291, R],
    [733.300, 736, 294, R], [736, 738.700, 296, R], [738.700, 744, 298, R]
];
const side = document.getElementById('sideBars');
[openTop, closeTop].forEach(list => list.forEach(([a, b, h, c]) => bar(side, a, TOP, b - a, h, c)));
[openBottom, closeBottom].forEach(list => list.forEach(([a, b, h, c]) => bar(side, a, BOTTOM - h, b - a, h, c)));

// Volume per minute: r up, g down, k flat
const COLORS = { r: '#cf4a42', g: '#4b962b', k: '#666' };
const opening = ('r58 r136 r215 r138 r211 g133 k54 g108 g53 k77 r33 g69 g23 r21 r17 g51 g35 r8 r8 k10 g9 r8 r8 g24 g23 r26 ' +
    'r8 g13 g13 k14 r8 r10 g22 g9 g12 r4 k13 g9 g34 g13 r31 r10 k7 g8 k20 r8 k15 r26 r11 k8 r15 r10 k9 r5 g10 r7 r16 ' +
    'k3 r4 g34 k29 r12 g10 r8 g3 g4 k3 g4 k5 g3 r10 k7 g13 g4 r25 r8 g4 k2 k3 k1 g2 k1 k2 r7 k4 g8 r8 g4 k10 k6 r3 ' +
    'k5 g3 g13 g12 k3 g2 k5 g4 r4').split(' ');
const spikes = {
    104: 'r6', 112: 'g6', 118: 'k8', 122: 'r6', 128: 'g7', 132: 'r5', 136: 'g8', 141: 'g6', 142: 'g7', 144: 'g11',
    145: 'g32', 146: 'r12', 147: 'r5', 165: 'r5', 166: 'r6', 185: 'k7', 189: 'g15', 190: 'g8', 191: 'g8', 197: 'r7',
    199: 'k9', 204: 'g8', 212: 'k7', 217: 'g13', 219: 'k9', 220: 'g14', 221: 'g27', 222: 'g18', 223: 'r12', 224: 'r12',
    225: 'r12', 226: 'r12', 227: 'r23', 228: 'r12', 229: 'r12', 230: 'g15', 231: 'k7', 232: 'r8', 233: 'r9', 234: 'r10',
    235: 'r12', 236: 'r30', 237: 'k28', 238: 'g23', 239: 'r15', 240: 'k32'
};
const volume = document.getElementById('volumeBars');
for (let i = 0; i <= 240; i++) {
    const item = opening[i] || spikes[i] || 'kgrg'[i % 4] + (1 + i * 7 % 4);
    const h = Number(item.slice(1));
    bar(volume, 174 + i * 2.117, 1703.500 - h, i < 6 ? 1.900 : 1.300, h, COLORS[item[0]], .85);
}

// MACD histogram: x, value pairs, bars in between are interpolated
const macd = [
    42, 5, 50, 40, 58, 150, 64, 340, 70, 377, 78, 377, 84, 277, 90, 140, 97, 75, 103, 87, 109, 37, 115, -10, 122, -35, 128, -90,
    134, -160, 140, -215, 146, -200, 152, -175, 158, -188, 165, -188, 171, -150, 177, -100, 183, -125, 190, -148, 196, -142,
    202, -118, 208, -60, 214, -20, 220, -5, 227, 8, 234, 12, 240, -8, 247, -25, 253, -50, 260, -80, 266, -105, 278, -165,
    290, -185, 296, -178, 302, -150, 308, -125, 314, -112, 326, -124, 332, -100, 338, -62, 342, -5, 345, 75, 351, 105,
    357, 150, 363, 215, 370, 235, 376, 220, 388, 210, 395, 195, 401, 120, 407, 50, 412, -8, 418, -20, 430, -45, 445, -48,
    460, -40, 468, -5, 474, 25, 480, 50, 493, 45, 499, 60, 505, 97, 511, 85, 518, 55, 530, 22, 540, 10, 560, 35, 570, 45,
    590, 50, 600, 20, 610, 3, 616, -15, 630, -38, 642, -38, 655, -15, 680, -5, 700, -10, 715, -8, 735, -20, 748, -42,
    755, -20, 765, -8, 780, 5, 790, 15, 798, 35, 806, 18, 820, 15, 830, 8, 838, -10, 850, -35, 865, -72, 872, -60, 890, -50,
    910, -60, 925, -100, 940, -170, 947, -150, 955, -90, 965, -35, 975, -15, 983, 10, 990, 55, 997, 95, 1008, 112,
    1020, 100, 1030, 55, 1036, 12, 1042, -5, 1050, -28, 1057, -18, 1064, 5, 1072, 45, 1083, 72, 1097, 60, 1108, 30,
    1114, -4, 1120, 8, 1135, 6, 1150, 25, 1160, 5, 1170, -8, 1190, -20, 1210, -50, 1225, -90, 1240, -85, 1252, -35,
    1257, 0, 1265, 30, 1278, 70, 1286, 78, 1296, 35, 1304, 5, 1315, 25, 1330, 55, 1340, 42, 1350, 15, 1358, -8, 1375, -30,
    1392, -80, 1408, -150, 1418, -60, 1426, -10, 1434, 55, 1442, 45, 1450, 12, 1460, 40, 1470, 90, 1478, 150, 1486, 240,
    1500, 238, 1510, 190, 1522, 145
];
const hist = document.getElementById('macdBars');
let p = 0;
for (let x = 42; x < 1521; x += 6.150) {
    while (macd[p + 2] < x) p += 2;
    const t = (x - macd[p]) / (macd[p + 2] - macd[p]);
    const v = macd[p + 1] + t * (macd[p + 3] - macd[p + 1]);
    bar(hist, x - 2, v > 0 ? 427 - v : 427, 4.700, Math.abs(v), v > 0 ? COLORS.r : COLORS.g, .9);
}
```
